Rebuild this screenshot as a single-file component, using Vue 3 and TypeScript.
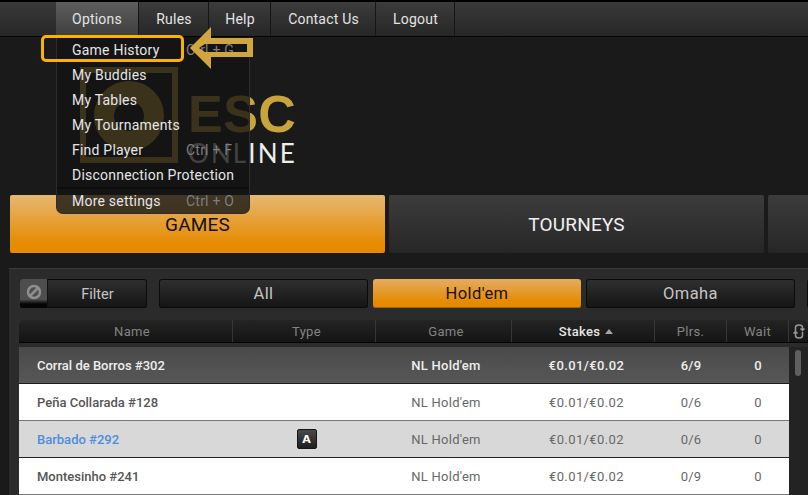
<script setup lang="ts">
interface Row {
  name: string;
  plrs: string;
  kind: 'active' | 'light' | 'grey';
  blue?: boolean;
  auto?: boolean;
}

const navItems = ['Options', 'Rules', 'Help', 'Contact Us', 'Logout'];

const menuItems = [
  { label: 'Game History', keys: 'Ctrl + G' },
  { label: 'My Buddies', keys: '' },
  { label: 'My Tables', keys: '' },
  { label: 'My Tournaments', keys: '' },
  { label: 'Find Player', keys: 'Ctrl + F' },
  { label: 'Disconnection Protection', keys: '' },
];

const rows: Row[] = [
  { name: 'Corral de Borros #302', plrs: '6/9', kind: 'active' },
  { name: 'Peña Collarada #128', plrs: '0/6', kind: 'light' },
  { name: 'Barbado #292', plrs: '0/6', kind: 'grey', blue: true, auto: true },
  { name: 'Montesinho #241', plrs: '0/9', kind: 'light' },
];
</script>

<template>
  <div class="app">
    <nav class="nav">
      <button
        v-for="(item, i) in navItems"
        :key="item"
        class="nav-btn"
        :class="[`nav-btn--${i}`, { 'nav-btn--open': i === 0 }]"
      >
        {{ item }}
      </button>
    </nav>

    <header class="hero">
      <div class="logo">
        <svg class="logo-mark" width="98" height="96" viewBox="0 0 98 96">
          <rect x="3" y="3" width="92" height="90" fill="none" stroke="#c9a33c" stroke-width="6" />
          <circle cx="49" cy="49" r="25" fill="none" stroke="#c9a33c" stroke-width="20" />
        </svg>
        <div class="logo-text">
          <div class="logo-esc">ESC</div>
          <div class="logo-online">ONLINE</div>
        </div>
      </div>

      <div class="menu">
        <div v-for="m in menuItems" :key="m.label" class="menu-row">
          <span>{{ m.label }}</span>
          <span v-if="m.keys" class="menu-keys">{{ m.keys }}</span>
        </div>
        <div class="menu-row menu-row--last">
          <span>More settings</span>
          <span class="menu-keys">Ctrl + O</span>
        </div>
      </div>

      <div class="callout" />
      <svg class="arrow" width="70" height="50" viewBox="0 0 70 50">
        <path
          d="M5 26 26 5V16H68V35H26V47ZM14 26 20 22H62V30H20Z"
          fill="#d1a63e"
          fill-rule="evenodd"
        />
      </svg>
    </header>

    <div class="tabs">
      <div class="tab tab--on">GAMES</div>
      <div class="tab">TOURNEYS</div>
      <div class="tab tab--cut" />
    </div>

    <section class="panel">
      <div class="filters">
        <div class="filter-btn">
          <span class="filter-toggle">
            <svg width="18" height="18" viewBox="0 0 18 18">
              <circle cx="9" cy="9" r="6" fill="none" stroke="#8f8f8f" stroke-width="2.500" />
              <path d="M5 13 13 5" stroke="#8f8f8f" stroke-width="2.500" />
            </svg>
          </span>
          <span class="filter-label">Filter</span>
        </div>
        <div class="pill">All</div>
        <div class="pill pill--on">Hold'em</div>
        <div class="pill">Omaha</div>
        <div class="pill pill--cut" />
      </div>

      <div class="thead cols">
        <div class="th-name">Name</div>
        <div class="th-shift">Type</div>
        <div class="th-shift">Game</div>
        <div class="sorted">Stakes <i class="caret" /></div>
        <div>Plrs.</div>
        <div>Wait</div>
        <div class="refresh">
          <svg width="12" height="17" viewBox="0 0 12 17">
            <path
              d="M9.500 7V4.500C9.500 1.200 2.500 1.200 2.500 4.500V8M2.500 10V12.500C2.500 15.800 9.500 15.800 9.500 12.500V9M7.500 5.500 9.500 7.500 11.500 5.500M.5 10.500 2.500 8.500 4.500 10.500"
              fill="none"
              stroke="#969696"
              stroke-width="1.500"
            />
          </svg>
        </div>
      </div>

      <div class="body">
        <div class="rows">
          <div v-for="r in rows" :key="r.name" class="row cols" :class="`row--${r.kind}`">
            <div class="cell-name" :class="{ 'cell-name--blue': r.blue }">{{ r.name }}</div>
            <div class="cell-type">
              <span v-if="r.auto" class="badge">A</span>
            </div>
            <div class="cell-c cell-game">NL Hold'em</div>
            <div class="cell-c cell-stakes">€0.01/€0.02</div>
            <div class="cell-c">{{ r.plrs }}</div>
            <div class="cell-c">0</div>
          </div>
        </div>
        <div class="scroll"><div class="thumb" /></div>
      </div>
    </section>
  </div>
</template>

<style>
html,
body {
  margin: 0;
  background: #1a1a1a;
  overflow: hidden;
}
</style>

<style scoped>
.app {
  width: 808px;
  height: 495px;
  overflow: hidden;
  background: #1a1a1a;
  font-family: Roboto, "Liberation Sans", sans-serif;
  color: #ddd;
}

/* top bar */
.nav {
  height: 34px;
  padding-left: 56px;
  display: flex;
  gap: 1px;
  background: linear-gradient(#3a3a3a, #262626);
  border-top: 2px solid #000;
  border-bottom: 1px solid #050505;
}

.nav-btn {
  border: 0;
  padding: 0;
  height: 34px;
  background: linear-gradient(#3c3c3c, #262626);
  border-right: 1px solid #161616;
  color: #e4e4e4;
  font: 400 14px Roboto, sans-serif;
  letter-spacing: 0.2px;
}

.nav-btn--0 { width: 83px; }
.nav-btn--1 { width: 69px; }
.nav-btn--2 { width: 61px; }
.nav-btn--3 { width: 104px; }
.nav-btn--4 { width: 78px; }

.nav-btn--open {
  background: linear-gradient(#5e5e5e, #3e3e3e);
}

/* logo area */
.hero {
  position: relative;
  height: 158px;
  display: flex;
  padding: 30px 0 0 80px;
  box-sizing: border-box;
}

.logo {
  display: flex;
  gap: 10px;
}

.logo-text {
  padding-top: 23px;
  width: 108px;
}

.logo-esc {
  font: 700 52px/48px "Liberation Sans", sans-serif;
  color: #c9a33c;
  letter-spacing: 0.5px;
}

.logo-online {
  font: 400 26px/30px Lato, Roboto, sans-serif;
  color: #eee;
  letter-spacing: 2.100px;
}

.menu {
  position: absolute;
  left: 56px;
  top: 0;
  width: 194px;
  height: 177px;
  box-sizing: border-box;
  background: rgba(19, 19, 19, 0.79);
  border: 1px solid #2c2c2c;
  border-top: 0;
  border-radius: 0 0 7px 7px;
  font-size: 14px;
  color: #e6e6e6;
}

.menu-row {
  height: 25px;
  display: flex;
  align-items: center;
  justify-content: space-between;
  padding: 0 15px;
  letter-spacing: 0.22px;
  white-space: nowrap;
}

.menu-row--last {
  height: 24px;
  border-top: 2px solid #0c0c0c;
}

.menu-keys {
  color: #7e7e7e;
  width: 48px;
  white-space: nowrap;
}

.callout {
  position: absolute;
  left: 41px;
  top: -2px;
  width: 143px;
  height: 27px;
  box-sizing: border-box;
  border: 3px solid #f8b400;
  border-radius: 5px;
}

.arrow {
  position: absolute;
  left: 185px;
  top: -15px;
}

/* main tabs */
.tabs {
  display: flex;
  gap: 4px;
  padding-left: 10px;
}

.tab {
  flex: 0 0 375px;
  height: 58px;
  display: flex;
  align-items: center;
  justify-content: center;
  border-radius: 2px;
  background: linear-gradient(#3c3c3c, #262626);
  font-size: 19px;
  letter-spacing: 0.2px;
  color: #f0f0f0;
}

.tab--on {
  background: linear-gradient(#e6b871, #e68a00 85%);
  color: #111;
}

.tab--cut {
  flex-basis: 60px;
}

/* table panel */
.panel {
  margin: 15px 0 0 9px;
  height: 240px;
  background: #2b2b2b;
  border-top: 1px solid #3a3a3a;
  padding: 10px 0 0 10px;
}

.filters {
  display: flex;
  gap: 5px;
  height: 29px;
  margin-left: 1px;
}

.filter-btn {
  flex: 0 0 127px;
  margin-right: 7px;
  display: flex;
  border-radius: 3px;
  background: linear-gradient(#303030, #141414);
  box-shadow: inset 0 0 0 1px #0b0b0b;
}

.filter-toggle {
  width: 28px;
  height: 29px;
  padding: 1px 0 5px;
  box-sizing: border-box;
  display: flex;
  align-items: center;
  justify-content: center;
  background: linear-gradient(#4e4e4e 0 70%, #050505 86%);
  border-radius: 3px 0 0 3px;
  border-right: 1px solid #111;
}

.filter-label {
  flex: 1;
  text-align: center;
  line-height: 32px;
  font-size: 14.500px;
  color: #c6c6c6;
}

.pill {
  flex: 0 0 209px;
  display: flex;
  align-items: center;
  justify-content: center;
  border-radius: 3px;
  background: linear-gradient(#303030, #141414);
  box-shadow: inset 0 0 0 1px #0b0b0b;
  font-size: 16.500px;
  letter-spacing: 0.4px;
  color: #c4c4c4;
}

.pill--on {
  flex-basis: 208px;
  background: linear-gradient(#e3ad62, #e68a00 80%);
  box-shadow: inset 0 -1px 0 #a86500;
  color: #1a1100;
}

.pill--cut {
  margin-left: 7px;
  flex-basis: 20px;
}

.cols {
  display: grid;
  grid-template-columns: 214px 143px 136px 143px 72px 62px;
}

.thead {
  grid-template-columns: 214px 143px 136px 143px 72px 62px 19px;
  margin-top: 12px;
  height: 23px;
  width: 789px;
  background: linear-gradient(#242424, #141414);
  border-radius: 5px 5px 0 0;
  border-bottom: 1px solid #050505;
  box-sizing: border-box;
  font-size: 13px;
  letter-spacing: 0.3px;
  color: #848484;
}

.thead > div {
  display: flex;
  align-items: center;
  justify-content: center;
  gap: 5px;
  padding-top: 1px;
  border-right: 1px solid #363636;
}

.thead .th-name {
  padding-left: 13px;
}

.thead .th-shift {
  padding-left: 5px;
}

.thead .sorted {
  padding-left: 6px;
  color: #e6e6e6;
  font-weight: 500;
}

.thead .refresh {
  border-right: 0;
}

.caret {
  width: 0;
  height: 0;
  border: 4.500px solid transparent;
  border-top: 0;
  border-bottom: 5px solid #a5a5a5;
}

.body {
  display: flex;
  margin-top: 4px;
  width: 789px;
}

.rows {
  width: 770px;
  flex: none;
}

.row {
  height: 37px;
  box-sizing: border-box;
  align-items: center;
  font-size: 13px;
  font-weight: 500;
  color: #5c5c5c;
  border-bottom: 1.500px solid #777;
  background: #fff;
}

.row--active {
  background: linear-gradient(#4a4a4a, #575757);
  border-bottom-color: #1c1c1c;
  color: #eee;
}

.row--grey {
  background: #d8d8d8;
  border-bottom-color: #222;
}

.cell-name {
  padding-left: 18px;
  color: #555;
}

.row--active .cell-name {
  color: #eee;
}

.cell-name--blue {
  color: #4f8ddb;
}

.cell-type {
  display: flex;
  justify-content: center;
  padding-left: 4px;
}

.cell-c {
  text-align: center;
  font-weight: 400;
  color: #686868;
  font-size: 13px;
  letter-spacing: 0.25px;
}

.cell-game {
  padding-left: 4px;
}

.cell-stakes {
  padding-left: 6px;
  letter-spacing: 0.4px;
}

.row--active .cell-c {
  color: #eee;
  font-weight: 500;
}

.badge {
  width: 20px;
  height: 20px;
  box-sizing: border-box;
  border: 1px solid #141414;
  display: flex;
  align-items: center;
  justify-content: center;
  border-radius: 2px;
  background: linear-gradient(#4a4a4a, #1f1f1f);
  color: #fff;
  font: 700 11px "DejaVu Sans", sans-serif;
}

.scroll {
  flex: 1;
  height: 148px;
  background: #232323;
  position: relative;
}

.thumb {
  position: absolute;
  left: 6px;
  top: 3px;
  width: 6px;
  height: 26px;
  border-radius: 3px;
  background: #5f5f5f;
}
</style>
